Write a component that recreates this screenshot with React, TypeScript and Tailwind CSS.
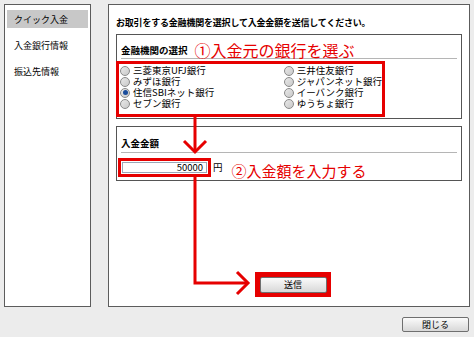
import React from "react";

const banksLeft = ["三菱東京UFJ銀行", "みずほ銀行", "住信SBIネット銀行", "セブン銀行"];
const banksRight = ["三井住友銀行", "ジャパンネット銀行", "イーバンク銀行", "ゆうちょ銀行"];

function Radio({ label, checked }: { label: string; checked?: boolean }) {
  return (
    <label className="flex h-[11px] items-center gap-[2px] whitespace-nowrap leading-none">
      <span className="flex h-[10px] w-[10px] shrink-0 items-center justify-center rounded-full border border-[#8a8a8a] bg-gradient-to-br from-[#e9e9e9] to-[#c9c9c9]">
        {checked && <span className="h-[5px] w-[5px] rounded-full bg-[#1b4d9c]" />}
      </span>
      <span className="ml-[1px]">{label}</span>
    </label>
  );
}

const btnCls =
  "flex items-center justify-center rounded-[2px] border border-[#6f6f6f] bg-gradient-to-b from-[#fbfbfb] to-[#d8d8d8] text-[9px] leading-none text-black";

export default function App() {
  return (
    <div
      className="relative h-[337px] w-[474px] overflow-hidden bg-[#ececec] text-black"
      style={{ fontFamily: '"Noto Sans CJK JP", "Noto Sans", sans-serif' }}
    >
      <div className="flex gap-[17px] pl-[4px] pt-[4px]">
        {/* Left menu */}
        <div className="flex h-[303px] w-[87px] flex-col border border-[#5c5c5c] bg-white px-[2px] pt-[5px] text-[9px] leading-none">
          <div className="flex h-[18px] items-center bg-[#c8c8c8] pl-[7px]">クイック入金</div>
          <div className="mt-[8px] flex h-[18px] items-center pl-[7px]">入金銀行情報</div>
          <div className="mt-[8px] flex h-[18px] items-center pl-[7px]">振込先情報</div>
        </div>

        {/* Main panel */}
        <div className="flex h-[303px] w-[362px] flex-col border border-[#5c5c5c] bg-white">
          <div className="ml-[7px] mt-[13px] text-[9px] font-bold leading-none tracking-[-0.2px]">
            お取引をする金融機関を選択して入金金額を送信してください。
          </div>

          {/* Bank select box */}
          <div className="ml-[7px] mt-[7px] h-[85px] w-[346px] border border-[#555]">
            <div className="mx-[4px] flex h-[24px] items-end border-b border-[#b5b5b5] pb-[3px]">
              <span className="text-[9.5px] font-bold leading-none">金融機関の選択</span>
              <span className="ml-[7px] mb-[-3px] text-[16px] leading-none text-[#e60000]">①入金元の銀行を選ぶ</span>
            </div>
            <div className="-ml-[1px] mt-[2px] flex h-[56px] w-[269px] border-[3px] border-[#e60000] pl-[1px] pt-[1px] text-[9.5px] leading-none">
              <div className="flex w-[167px] flex-col">
                {banksLeft.map((b) => (
                  <Radio key={b} label={b} checked={b === "住信SBIネット銀行"} />
                ))}
              </div>
              <div className="flex flex-col">
                {banksRight.map((b) => (
                  <Radio key={b} label={b} />
                ))}
              </div>
            </div>
          </div>

          {/* Amount box */}
          <div className="ml-[7px] mt-[7px] h-[55px] w-[346px] border border-[#555]">
            <div className="mx-[4px] flex h-[26px] items-end border-b border-[#b5b5b5] pb-[4px]">
              <span className="text-[9.5px] font-bold leading-none">入金金額</span>
            </div>
            <div className="mt-[4px] flex items-center">
              <div className="ml-[1px] flex h-[19px] w-[93px] items-center border-[3px] border-[#e60000] bg-white p-[1px]">
                <div className="flex h-full w-full items-center justify-end border border-[#9aa7b8] pr-[3px] text-[9.5px] leading-none">
                  50000
                </div>
              </div>
              <span className="ml-[2px] text-[9.5px] leading-none">円</span>
              <span className="ml-[9px] mt-[6px] text-[15px] leading-none text-[#e60000]">②入金額を入力する</span>
            </div>
          </div>

          {/* Submit */}
          <div className="ml-[146px] mt-[91px] flex h-[25px] w-[76px] items-center justify-center bg-[#e60000]">
            <button className={`${btnCls} h-[16px] w-[67px]`}>送信</button>
          </div>
        </div>
      </div>

      <div className="mt-[10px] flex justify-end pr-[5px]">
        <button className={`${btnCls} h-[15px] w-[67px]`}>閉じる</button>
      </div>

      {/* Annotation arrows */}
      <svg className="pointer-events-none absolute left-0 top-0" width="474" height="337">
        <g fill="none" stroke="#e60000" strokeWidth="3">
          <line x1="195" y1="116" x2="195" y2="150" />
          <polyline points="184,141 195,152 206,141" strokeLinejoin="miter" />
          <polyline points="195,176 195,283 246,283" strokeLinejoin="miter" />
          <polyline points="237,272 248,283 237,294" strokeLinejoin="miter" />
        </g>
      </svg>
    </div>
  );
}
